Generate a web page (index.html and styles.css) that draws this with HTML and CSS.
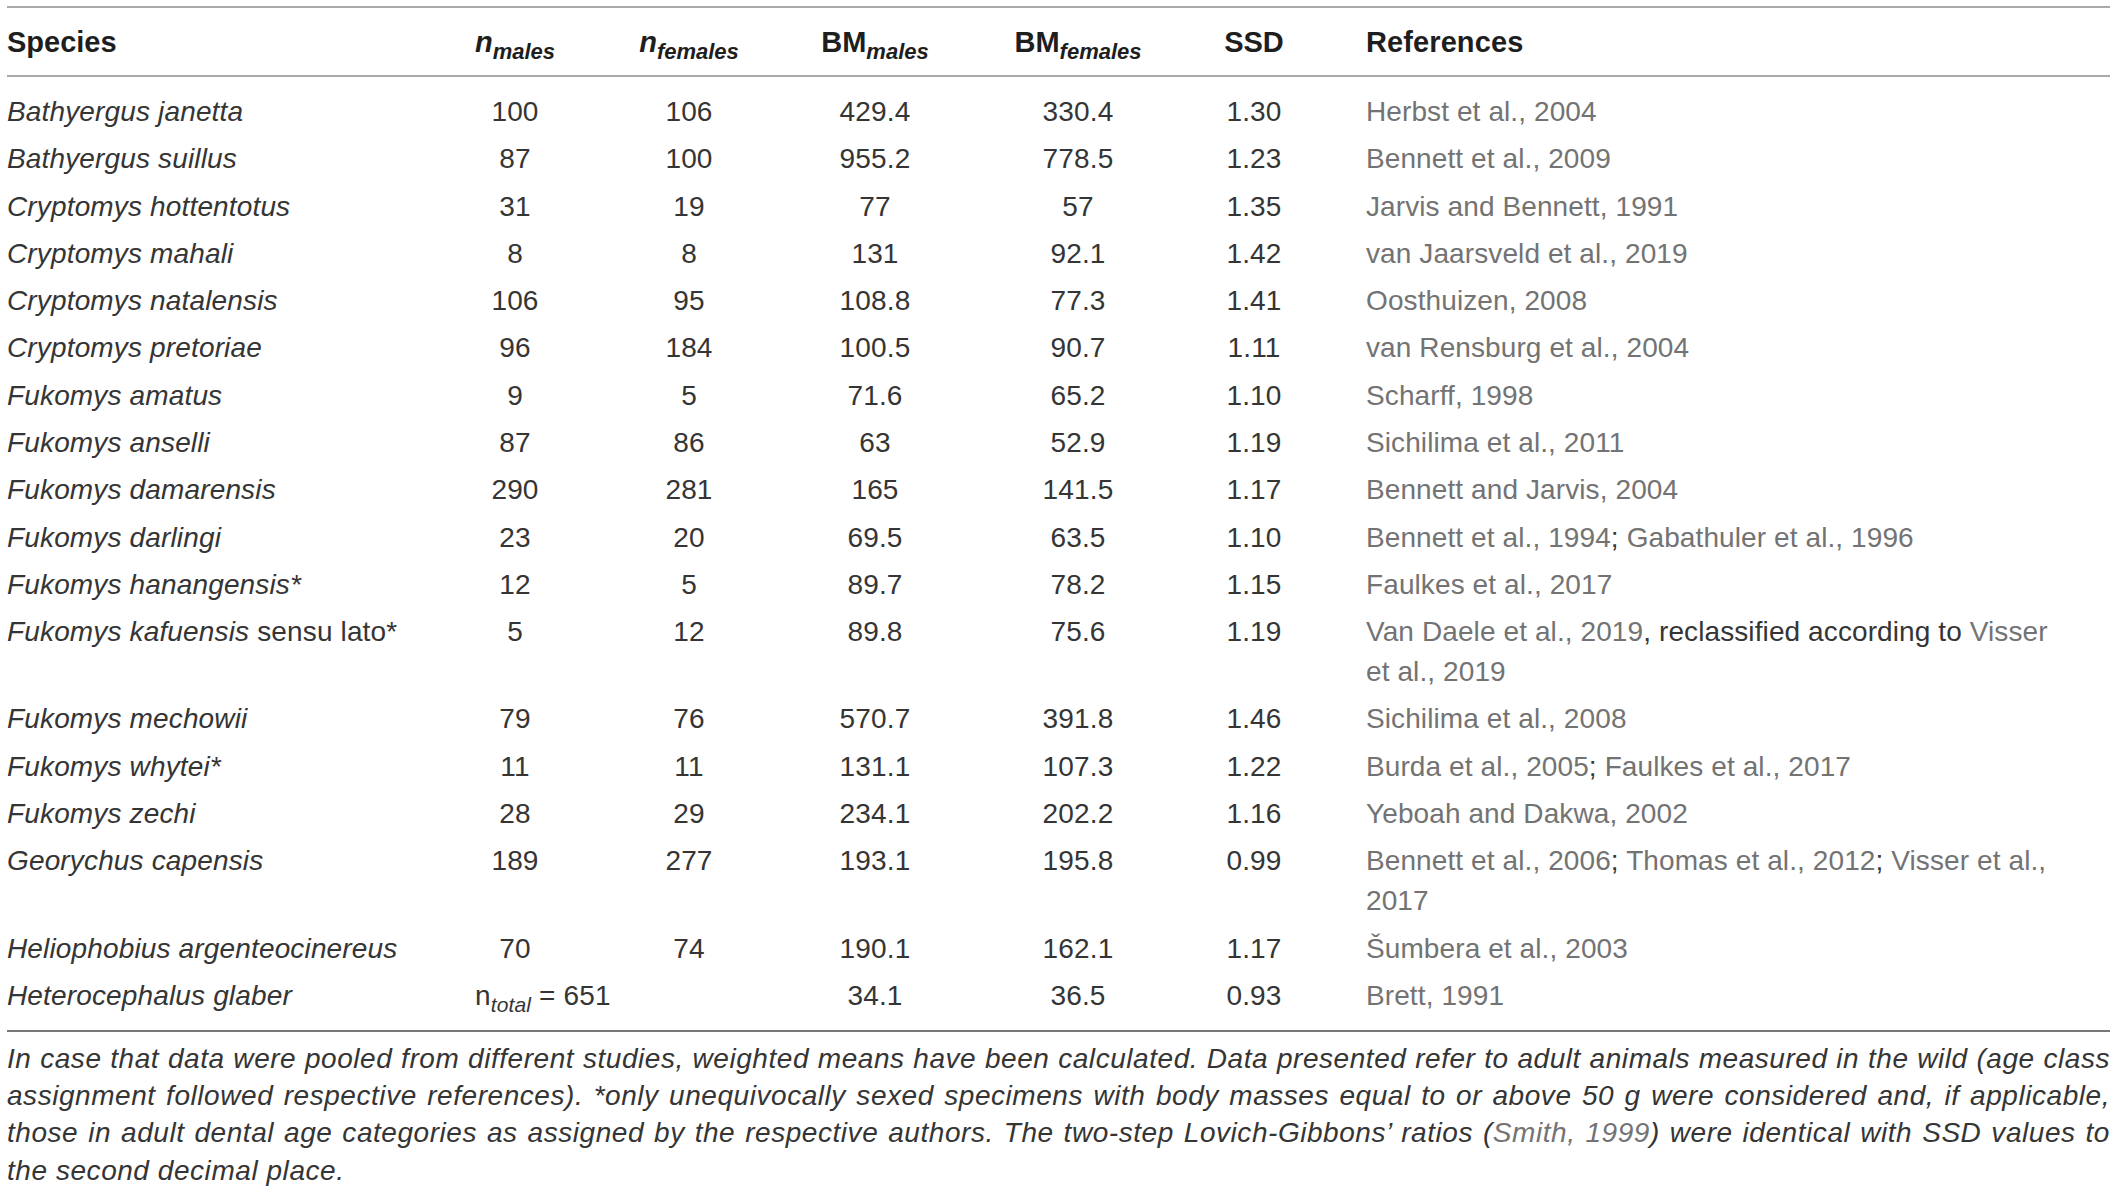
FILE: index.html
```html
<!DOCTYPE html>
<html lang="en">
  <head>
    <meta charset="UTF-8" />
    <meta name="viewport" content="width=device-width, initial-scale=1.0" />
    <title>Sexual size dimorphism in African mole-rats</title>
    <link rel="stylesheet" href="styles.css">
  </head>
  <body>
    <div class="table-wrap">
      <table class="ssd-table">
        <colgroup>
          <col class="col-species" />
          <col class="col-nm" />
          <col class="col-nf" />
          <col class="col-bmm" />
          <col class="col-bmf" />
          <col class="col-ssd" />
          <col class="col-ref" />
        </colgroup>
        <thead>
          <tr>
            <th class="left">Species</th>
            <th><i>n<sub>males</sub></i></th>
            <th><i>n<sub>females</sub></i></th>
            <th>BM<sub>males</sub></th>
            <th>BM<sub>females</sub></th>
            <th>SSD</th>
            <th class="left ref">References</th>
          </tr>
        </thead>
        <tbody>
          <tr>
            <td class="left"><i>Bathyergus janetta</i></td>
            <td>100</td><td>106</td><td>429.4</td><td>330.4</td><td>1.30</td>
            <td class="ref"><a>Herbst et al., 2004</a></td>
          </tr>
          <tr>
            <td class="left"><i>Bathyergus suillus</i></td>
            <td>87</td><td>100</td><td>955.2</td><td>778.5</td><td>1.23</td>
            <td class="ref"><a>Bennett et al., 2009</a></td>
          </tr>
          <tr>
            <td class="left"><i>Cryptomys hottentotus</i></td>
            <td>31</td><td>19</td><td>77</td><td>57</td><td>1.35</td>
            <td class="ref"><a>Jarvis and Bennett, 1991</a></td>
          </tr>
          <tr>
            <td class="left"><i>Cryptomys mahali</i></td>
            <td>8</td><td>8</td><td>131</td><td>92.1</td><td>1.42</td>
            <td class="ref"><a>van Jaarsveld et al., 2019</a></td>
          </tr>
          <tr>
            <td class="left"><i>Cryptomys natalensis</i></td>
            <td>106</td><td>95</td><td>108.8</td><td>77.3</td><td>1.41</td>
            <td class="ref"><a>Oosthuizen, 2008</a></td>
          </tr>
          <tr>
            <td class="left"><i>Cryptomys pretoriae</i></td>
            <td>96</td><td>184</td><td>100.5</td><td>90.7</td><td>1.11</td>
            <td class="ref"><a>van Rensburg et al., 2004</a></td>
          </tr>
          <tr>
            <td class="left"><i>Fukomys amatus</i></td>
            <td>9</td><td>5</td><td>71.6</td><td>65.2</td><td>1.10</td>
            <td class="ref"><a>Scharff, 1998</a></td>
          </tr>
          <tr>
            <td class="left"><i>Fukomys anselli</i></td>
            <td>87</td><td>86</td><td>63</td><td>52.9</td><td>1.19</td>
            <td class="ref"><a>Sichilima et al., 2011</a></td>
          </tr>
          <tr>
            <td class="left"><i>Fukomys damarensis</i></td>
            <td>290</td><td>281</td><td>165</td><td>141.5</td><td>1.17</td>
            <td class="ref"><a>Bennett and Jarvis, 2004</a></td>
          </tr>
          <tr>
            <td class="left"><i>Fukomys darlingi</i></td>
            <td>23</td><td>20</td><td>69.5</td><td>63.5</td><td>1.10</td>
            <td class="ref"><a>Bennett et al., 1994</a>; <a>Gabathuler et al., 1996</a></td>
          </tr>
          <tr>
            <td class="left"><i>Fukomys hanangensis*</i></td>
            <td>12</td><td>5</td><td>89.7</td><td>78.2</td><td>1.15</td>
            <td class="ref"><a>Faulkes et al., 2017</a></td>
          </tr>
          <tr>
            <td class="left"><i>Fukomys kafuensis</i> sensu lato*</td>
            <td>5</td><td>12</td><td>89.8</td><td>75.6</td><td>1.19</td>
            <td class="ref"><a>Van Daele et al., 2019</a>, reclassified according to <a>Visser et al., 2019</a></td>
          </tr>
          <tr>
            <td class="left"><i>Fukomys mechowii</i></td>
            <td>79</td><td>76</td><td>570.7</td><td>391.8</td><td>1.46</td>
            <td class="ref"><a>Sichilima et al., 2008</a></td>
          </tr>
          <tr>
            <td class="left"><i>Fukomys whytei*</i></td>
            <td>11</td><td>11</td><td>131.1</td><td>107.3</td><td>1.22</td>
            <td class="ref"><a>Burda et al., 2005</a>; <a>Faulkes et al., 2017</a></td>
          </tr>
          <tr>
            <td class="left"><i>Fukomys zechi</i></td>
            <td>28</td><td>29</td><td>234.1</td><td>202.2</td><td>1.16</td>
            <td class="ref"><a>Yeboah and Dakwa, 2002</a></td>
          </tr>
          <tr>
            <td class="left"><i>Georychus capensis</i></td>
            <td>189</td><td>277</td><td>193.1</td><td>195.8</td><td>0.99</td>
            <td class="ref"><a>Bennett et al., 2006</a>; <a>Thomas et al., 2012</a>; <a>Visser et al., 2017</a></td>
          </tr>
          <tr>
            <td class="left"><i>Heliophobius argenteocinereus</i></td>
            <td>70</td><td>74</td><td>190.1</td><td>162.1</td><td>1.17</td>
            <td class="ref"><a>Šumbera et al., 2003</a></td>
          </tr>
          <tr>
            <td class="left"><i>Heterocephalus glaber</i></td>
            <td colspan="2" class="total">n<sub><i>total</i></sub> = 651</td>
            <td>34.1</td><td>36.5</td><td>0.93</td>
            <td class="ref"><a>Brett, 1991</a></td>
          </tr>
        </tbody>
      </table>
      <p class="footnote">In case that data were pooled from different studies, weighted means have been calculated. Data presented refer to adult animals measured in the wild (age class assignment followed respective references). *only unequivocally sexed specimens with body masses equal to or above 50 g were considered and, if applicable, those in adult dental age categories as assigned by the respective authors. The two-step Lovich-Gibbons’ ratios (<a>Smith, 1999</a>) were identical with SSD values to the second decimal place.</p>
    </div>
  </body>
</html>
```

FILE: styles.css
```css
* {
  margin: 0;
  padding: 0;
  box-sizing: border-box;
}
:root {
  --text-color: #353535;
  --link-color: #737373;
  --rule-light: #a9a9a9;
  --rule-dark: #777;
}
body {
  background: #fff;
  font-family: "Liberation Sans", Arial, sans-serif;
  color: var(--text-color);
}
.table-wrap {
  width: 2110px;
  padding: 6px 0 0 7px;
}
.ssd-table {
  width: 2103px;
  border-collapse: collapse;
  table-layout: fixed;
  font-size: 28px;
  letter-spacing: 0.15px;
}
.col-species { width: 423px; }
.col-nm { width: 170px; }
.col-nf { width: 178px; }
.col-bmm { width: 194px; }
.col-bmf { width: 212px; }
.col-ssd { width: 140px; }
.col-ref { width: 786px; }

th,
td {
  text-align: center;
  vertical-align: top;
  line-height: 40px;
  font-weight: normal;
}
th {
  font-weight: bold;
  font-size: 29px;
  letter-spacing: 0;
  color: #1e1e1e;
  padding: 13.5px 0;
  border-top: 2px solid var(--rule-light);
  border-bottom: 2px solid var(--rule-light);
}
th sub {
  font-size: 22px;
  font-style: italic;
  vertical-align: -7px;
  line-height: 0;
}
td {
  padding: 3.65px 0;
}
tbody tr:first-child td {
  padding-top: 15px;
}
tbody tr:last-child td {
  padding-bottom: 14px;
  border-bottom: 2px solid var(--rule-dark);
}
.left {
  text-align: left;
}
.ref {
  text-align: left;
  padding-left: 42px;
  padding-right: 49px;
}
.ref,
.ref a {
  letter-spacing: 0.1px;
}
a {
  color: var(--link-color);
  text-decoration: none;
}
.total {
  text-align: left;
  padding-left: 45px;
}
.total sub {
  font-size: 21px;
  vertical-align: -7px;
  line-height: 0;
}
.footnote {
  margin-top: 8px;
  width: 2103px;
  font-style: italic;
  font-size: 28px;
  letter-spacing: 0.55px;
  line-height: 37.3px;
  text-align: justify;
  color: var(--text-color);
}
```
